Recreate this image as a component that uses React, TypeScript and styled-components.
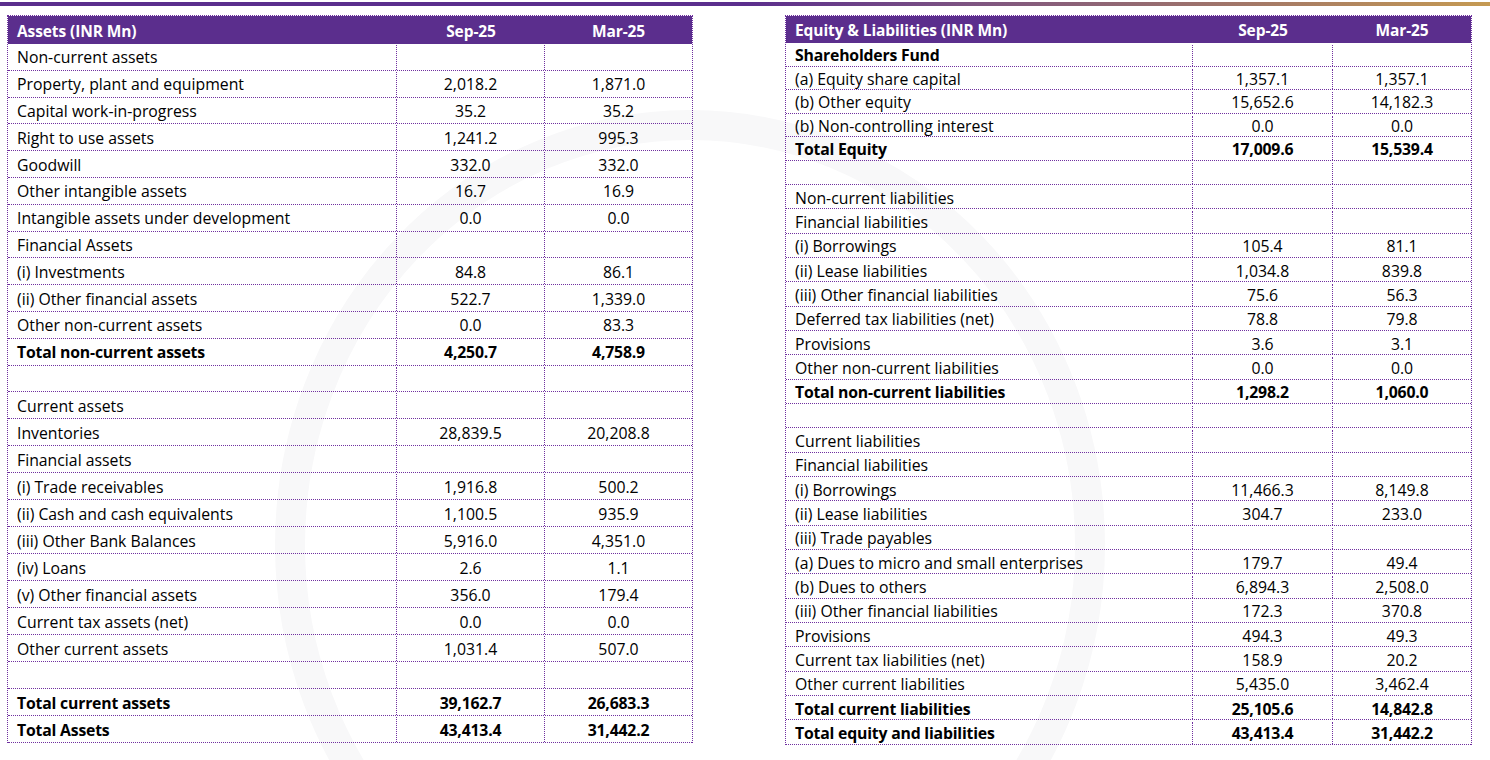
import React from "react";
import styled, { createGlobalStyle } from "styled-components";

const GlobalStyle = createGlobalStyle`
  *, *::before, *::after { box-sizing: border-box; }
  html, body { margin: 0; padding: 0; background: #ffffff; }
  body { font-family: "Open Sans", "Lato", sans-serif; color: #000; }
`;

const DOT = "#7030a0";
const HEAD_BG = "#5b2e8d";

type Line = { label: string; a?: string; b?: string; bold?: boolean; boldLabel?: boolean; h: number };

const L1 = 26.8;
const L2 = 27.0;
const assets: Line[] = [
  { label: "Non-current assets", h: L1 },
  { label: "Property, plant and equipment", a: "2,018.2", b: "1,871.0", h: L1 },
  { label: "Capital work-in-progress", a: "35.2", b: "35.2", h: L1 },
  { label: "Right to use assets", a: "1,241.2", b: "995.3", h: L1 },
  { label: "Goodwill", a: "332.0", b: "332.0", h: L1 },
  { label: "Other intangible assets", a: "16.7", b: "16.9", h: L1 },
  { label: "Intangible assets under development", a: "0.0", b: "0.0", h: L1 },
  { label: "Financial Assets", h: L1 },
  { label: "(i) Investments", a: "84.8", b: "86.1", h: L1 },
  { label: "(ii) Other financial assets", a: "522.7", b: "1,339.0", h: L1 },
  { label: "Other non-current assets", a: "0.0", b: "83.3", h: L1 },
  { label: "Total non-current assets", a: "4,250.7", b: "4,758.9", bold: true, h: L1 },
  { label: "", h: L1 },
  { label: "Current assets", h: L2 },
  { label: "Inventories", a: "28,839.5", b: "20,208.8", h: L2 },
  { label: "Financial assets", h: L2 },
  { label: "(i) Trade receivables", a: "1,916.8", b: "500.2", h: L2 },
  { label: "(ii) Cash and cash equivalents", a: "1,100.5", b: "935.9", h: L2 },
  { label: "(iii) Other Bank Balances", a: "5,916.0", b: "4,351.0", h: L2 },
  { label: "(iv) Loans", a: "2.6", b: "1.1", h: L2 },
  { label: "(v) Other financial assets", a: "356.0", b: "179.4", h: L2 },
  { label: "Current tax assets (net)", a: "0.0", b: "0.0", h: L2 },
  { label: "Other current assets", a: "1,031.4", b: "507.0", h: L2 },
  { label: "", h: L2 },
  { label: "Total current assets", a: "39,162.7", b: "26,683.3", bold: true, h: L2 },
  { label: "Total Assets", a: "43,413.4", b: "31,442.2", bold: true, h: L2 },
];

const R1 = 23.5;
const R2 = 24.35;
const liabilities: Line[] = [
  { label: "Shareholders Fund", boldLabel: true, h: R1 },
  { label: "(a) Equity share capital", a: "1,357.1", b: "1,357.1", h: R1 },
  { label: "(b) Other equity", a: "15,652.6", b: "14,182.3", h: R1 },
  { label: "(b) Non-controlling interest", a: "0.0", b: "0.0", h: R1 },
  { label: "Total Equity", a: "17,009.6", b: "15,539.4", bold: true, h: R1 },
  { label: "", h: R2 },
  { label: "Non-current liabilities", h: R2 },
  { label: "Financial liabilities", h: R2 },
  { label: "(i) Borrowings", a: "105.4", b: "81.1", h: R2 },
  { label: "(ii) Lease liabilities", a: "1,034.8", b: "839.8", h: R2 },
  { label: "(iii) Other financial liabilities", a: "75.6", b: "56.3", h: R2 },
  { label: "Deferred tax liabilities (net)", a: "78.8", b: "79.8", h: R2 },
  { label: "Provisions", a: "3.6", b: "3.1", h: R2 },
  { label: "Other non-current liabilities", a: "0.0", b: "0.0", h: R2 },
  { label: "Total non-current liabilities", a: "1,298.2", b: "1,060.0", bold: true, h: R2 },
  { label: "", h: R2 },
  { label: "Current liabilities", h: R2 },
  { label: "Financial liabilities", h: R2 },
  { label: "(i) Borrowings", a: "11,466.3", b: "8,149.8", h: R2 },
  { label: "(ii) Lease liabilities", a: "304.7", b: "233.0", h: R2 },
  { label: "(iii) Trade payables", h: R2 },
  { label: "(a) Dues to micro and small enterprises", a: "179.7", b: "49.4", h: R2 },
  { label: "(b) Dues to others", a: "6,894.3", b: "2,508.0", h: R2 },
  { label: "(iii) Other financial liabilities", a: "172.3", b: "370.8", h: R2 },
  { label: "Provisions", a: "494.3", b: "49.3", h: R2 },
  { label: "Current tax liabilities (net)", a: "158.9", b: "20.2", h: R2 },
  { label: "Other current liabilities", a: "5,435.0", b: "3,462.4", h: R2 },
  { label: "Total current liabilities", a: "25,105.6", b: "14,842.8", bold: true, h: R2 },
  { label: "Total equity and liabilities", a: "43,413.4", b: "31,442.2", bold: true, h: R2 },
];

const Page = styled.div`
  position: relative;
  width: 1490px;
  height: 760px;
  overflow: hidden;
  background: #ffffff;
`;

const Watermark = styled.svg`
  position: absolute;
  inset: 0;
  width: 1490px;
  height: 760px;
  pointer-events: none;
  z-index: 0;
`;

const TopBar = styled.div`
  position: relative;
  z-index: 1;
  margin-top: 2px;
  height: 4px;
  background: linear-gradient(90deg, #5b2e8d 0%, #5b2e8d 50%, #7d5481 65%, #a57a66 85%, #c59a52 100%);
`;

const Tables = styled.div`
  position: relative;
  z-index: 1;
  display: flex;
  align-items: flex-start;
  gap: 92px;
  padding: 9px 0 0 7px;
`;

const Sheet = styled.div<{ $w: number }>`
  width: ${(p) => p.$w}px;
  border-top: 1px dotted ${DOT};
  border-left: 1px dotted ${DOT};
  border-right: 1px dotted ${DOT};
`;

const HeaderRow = styled.div<{ $cols: string; $h: number }>`
  display: grid;
  grid-template-columns: ${(p) => p.$cols};
  height: ${(p) => p.$h}px;
  background: ${HEAD_BG};
  color: #ffffff;
  font-weight: 700;
  font-size: 15.5px;
  letter-spacing: -0.1px;
`;

const HeadCell = styled.div<{ $center?: boolean }>`
  display: flex;
  align-items: center;
  justify-content: ${(p) => (p.$center ? "center" : "flex-start")};
  padding: 1px 0 0 ${(p) => (p.$center ? 0 : 9)}px;
  line-height: 20px;
  white-space: nowrap;
`;

const Row = styled.div<{ $cols: string; $h: number; $pad: number }>`
  display: grid;
  grid-template-columns: ${(p) => p.$cols};
  height: ${(p) => p.$h}px;
  padding-top: ${(p) => p.$pad}px;
  border-bottom: 1px dotted ${DOT};
  font-size: 15.8px;
`;

const Cell = styled.div<{ $num?: boolean; $bold?: boolean; $last?: boolean }>`
  display: flex;
  align-items: center;
  justify-content: ${(p) => (p.$num ? "center" : "flex-start")};
  padding-left: ${(p) => (p.$num ? 0 : 9)}px;
  line-height: 20px;
  font-weight: ${(p) => (p.$bold ? 700 : 400)};
  letter-spacing: ${(p) => (p.$bold ? "-0.2px" : "0")};
  white-space: nowrap;
  border-right: ${(p) => (p.$last ? "none" : `1px dotted ${DOT}`)};
`;

function BalanceTable({
  title,
  lines,
  cols,
  width,
  headH,
  pad,
}: {
  title: string;
  lines: Line[];
  cols: string;
  width: number;
  headH: number;
  pad: number;
}) {
  return (
    <Sheet $w={width}>
      <HeaderRow $cols={cols} $h={headH}>
        <HeadCell>{title}</HeadCell>
        <HeadCell $center>Sep-25</HeadCell>
        <HeadCell $center>Mar-25</HeadCell>
      </HeaderRow>
      {lines.map((l, i) => (
        <Row key={i} $cols={cols} $h={l.h} $pad={pad}>
          <Cell $bold={l.bold || l.boldLabel}>{l.label}</Cell>
          <Cell $num $bold={l.bold}>{l.a ?? ""}</Cell>
          <Cell $num $bold={l.bold} $last>{l.b ?? ""}</Cell>
        </Row>
      ))}
    </Sheet>
  );
}

export default function App() {
  return (
    <Page>
      <GlobalStyle />
      <Watermark viewBox="0 0 1490 760">
        <ellipse cx="690" cy="545" rx="400" ry="420" fill="none" stroke="#f8f8f9" strokeWidth="30" />
      </Watermark>
      <TopBar />
      <Tables>
        <BalanceTable title="Assets (INR Mn)" lines={assets} cols="389px 148px 147px" width={686} headH={28} pad={1} />
        <BalanceTable
          title="Equity & Liabilities (INR Mn)"
          lines={liabilities}
          cols="407px 140px 138px"
          width={687}
          headH={27}
          pad={2}
        />
      </Tables>
    </Page>
  );
}
